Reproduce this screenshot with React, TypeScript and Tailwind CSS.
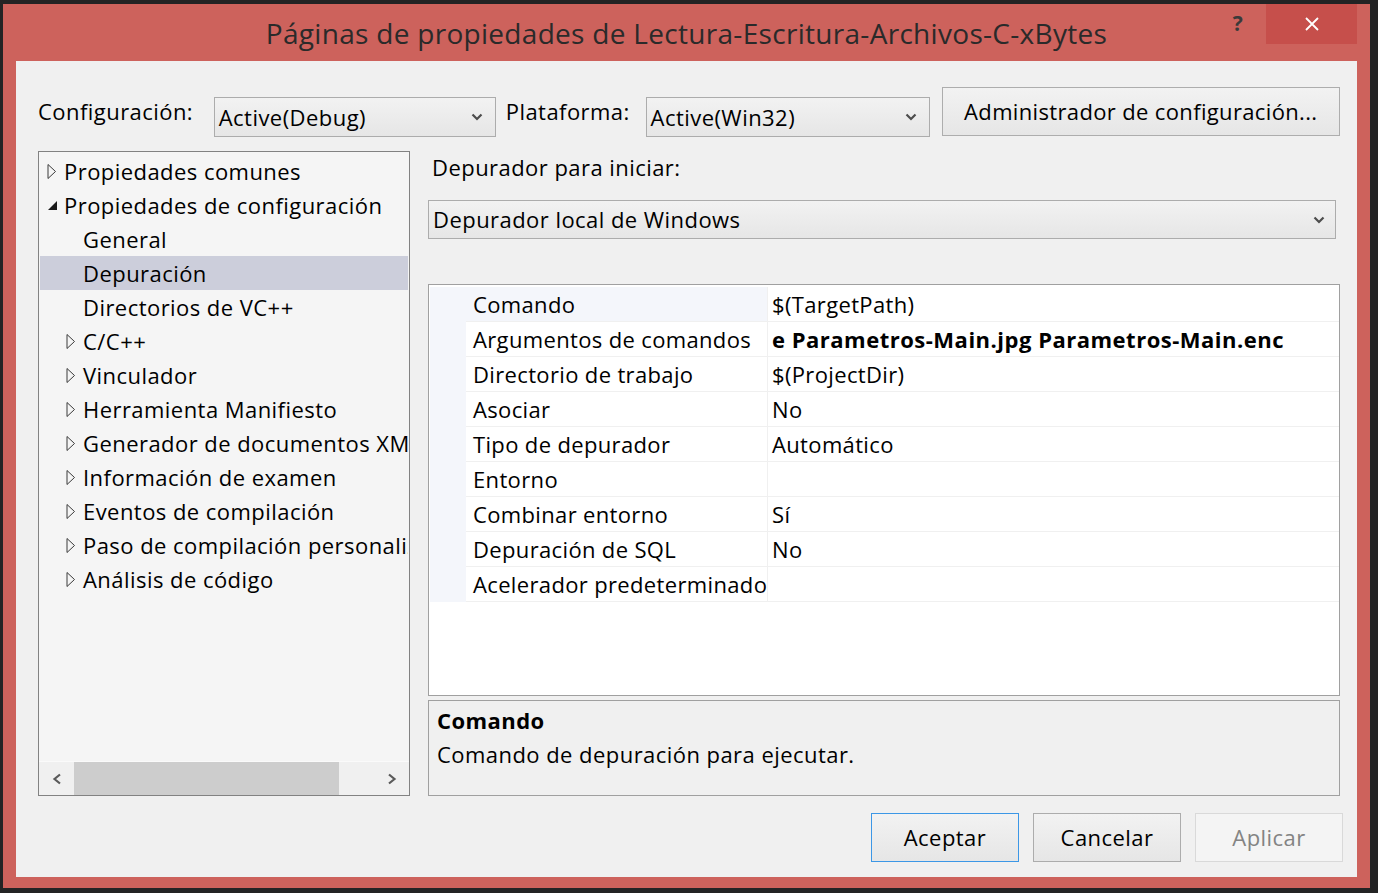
import React from 'react';

const font = { fontFamily: '"Open Sans", "Noto Sans", sans-serif' };

type TreeItem = { label: string; level: 0 | 1; tri: 'closed' | 'open' | 'none'; selected?: boolean };

const treeItems: TreeItem[] = [
  { label: 'Propiedades comunes', level: 0, tri: 'closed' },
  { label: 'Propiedades de configuración', level: 0, tri: 'open' },
  { label: 'General', level: 1, tri: 'none' },
  { label: 'Depuración', level: 1, tri: 'none', selected: true },
  { label: 'Directorios de VC++', level: 1, tri: 'none' },
  { label: 'C/C++', level: 1, tri: 'closed' },
  { label: 'Vinculador', level: 1, tri: 'closed' },
  { label: 'Herramienta Manifiesto', level: 1, tri: 'closed' },
  { label: 'Generador de documentos XML', level: 1, tri: 'closed' },
  { label: 'Información de examen', level: 1, tri: 'closed' },
  { label: 'Eventos de compilación', level: 1, tri: 'closed' },
  { label: 'Paso de compilación personalizado', level: 1, tri: 'closed' },
  { label: 'Análisis de código', level: 1, tri: 'closed' },
];

const props: { name: string; value: string; bold?: boolean }[] = [
  { name: 'Comando', value: '$(TargetPath)' },
  { name: 'Argumentos de comandos', value: 'e Parametros-Main.jpg Parametros-Main.enc', bold: true },
  { name: 'Directorio de trabajo', value: '$(ProjectDir)' },
  { name: 'Asociar', value: 'No' },
  { name: 'Tipo de depurador', value: 'Automático' },
  { name: 'Entorno', value: '' },
  { name: 'Combinar entorno', value: 'Sí' },
  { name: 'Depuración de SQL', value: 'No' },
  { name: 'Acelerador predeterminado', value: '' },
];

const Chevron = () => (
  <svg width="12" height="8" viewBox="0 0 12 8" className="shrink-0">
    <polyline points="1.5,1.5 6,6 10.5,1.5" fill="none" stroke="#4d4d4d" strokeWidth="2.2" />
  </svg>
);

const Triangle = ({ kind }: { kind: 'closed' | 'open' }) =>
  kind === 'closed' ? (
    <svg width="10" height="17" viewBox="0 0 10 17" className="shrink-0">
      <polygon points="1,1.5 8.5,8.5 1,15.5" fill="none" stroke="#3a3a3a" strokeWidth="1" />
    </svg>
  ) : (
    <svg width="11" height="11" viewBox="0 0 11 11" className="shrink-0">
      <polygon points="1,10 10,10 10,1" fill="#1a1a1a" />
    </svg>
  );

const Dropdown = ({ text, width }: { text: string; width: string }) => (
  <div
    className={`${width} h-[40px] flex items-center justify-between pl-[4px] pr-[12px] border border-[#acacac] bg-gradient-to-b from-[#f2f2f2] to-[#e6e6e6] text-[22px] text-black`}
  >
    <span className="whitespace-nowrap">{text}</span>
    <Chevron />
  </div>
);

const DialogButton = ({ text, variant }: { text: string; variant: 'default' | 'normal' | 'disabled' }) => {
  const cls =
    variant === 'default'
      ? 'border-[#3c97e6] bg-gradient-to-b from-[#f2f2f2] to-[#e6e6e6] text-black'
      : variant === 'normal'
        ? 'border-[#acacac] bg-gradient-to-b from-[#f2f2f2] to-[#e6e6e6] text-black'
        : 'border-[#d9d9d9] bg-[#f4f4f4] text-[#838383]';
  return (
    <div className={`w-[148px] h-[49px] flex items-center justify-center border text-[22px] ${cls}`}>{text}</div>
  );
};

export default function App() {
  return (
    <div
      className="w-[1378px] h-[893px] bg-[#232324] pt-[4px] pl-[3px] overflow-hidden tracking-[0.45px]"
      style={font}
    >
      <div className="w-[1367px] h-[884px] bg-[#cd625c] flex flex-col">
        {/* Title bar */}
        <div className="h-[57px] flex items-start relative">
          <div className="absolute left-0 right-0 top-[9px] text-center text-[28px] tracking-[0.3px] leading-[40px] text-[#2a2a2a] whitespace-nowrap">
            Páginas de propiedades de Lectura-Escritura-Archivos-C-xBytes
          </div>
          <div className="ml-auto flex items-start relative">
            <div className="w-[56px] h-[40px] flex items-center justify-center text-[21px] font-bold text-[#3a3a3a]">?</div>
            <div className="w-[91px] h-[40px] mr-[13px] bg-[#c64f4b] flex items-center justify-center">
              <svg width="14" height="14" viewBox="0 0 14 14">
                <path d="M1 1 L13 13 M13 1 L1 13" stroke="#ffffff" strokeWidth="1.8" />
              </svg>
            </div>
          </div>
        </div>

        {/* Client area */}
        <div className="mx-[13px] h-[816px] bg-[#f0f0f0] flex flex-col pl-[22px] pr-[17px] pt-[26px] text-black">
          {/* Configuration row */}
          <div className="flex items-start h-[50px]">
            <div className="h-[40px] mt-[4px] flex items-center text-[22px] w-[176px]">Configuración:</div>
            <div className="mt-[10px]">
              <Dropdown text="Active(Debug)" width="w-[282px]" />
            </div>
            <div className="h-[40px] mt-[4px] flex items-center text-[22px] ml-[10px] w-[140px]">Plataforma:</div>
            <div className="mt-[10px]">
              <Dropdown text="Active(Win32)" width="w-[284px]" />
            </div>
            <div className="ml-[12px] w-[399px] h-[49px] flex items-center justify-center border border-[#adadad] bg-gradient-to-b from-[#f2f2f2] to-[#e6e6e6] text-[22px] tracking-[0.35px]">
              Administrador de configuración...
            </div>
          </div>

          {/* Main row */}
          <div className="flex mt-[14px] h-[645px]">
            {/* Tree */}
            <div className="w-[372px] h-[645px] border border-[#828282] bg-[#f5f5f5] flex flex-col">
              <div className="flex-1 pt-[2px] overflow-hidden">
                {treeItems.map((it) => (
                  <div
                    key={it.label}
                    className={`h-[34px] mx-[1px] flex items-center text-[22px] whitespace-nowrap overflow-hidden ${
                      it.selected ? 'bg-[#cccedb]' : ''
                    }`}
                  >
                    <div className={`${it.level === 0 ? 'w-[24px] pl-[7px]' : 'w-[43px] pl-[26px]'} shrink-0 flex items-center`}>
                      {it.tri !== 'none' && <Triangle kind={it.tri} />}
                    </div>
                    <span>{it.label}</span>
                  </div>
                ))}
              </div>
              <div className="h-[34px] bg-[#f0f0f0] border-t border-[#fafafa] flex items-stretch">
                <div className="w-[35px] flex items-center justify-center">
                  <svg width="10" height="12" viewBox="0 0 10 12">
                    <polyline points="8,1.5 2.5,6 8,10.5" fill="none" stroke="#5a5a5a" strokeWidth="2.2" />
                  </svg>
                </div>
                <div className="w-[265px] bg-[#cdcdcd]" />
                <div className="flex-1" />
                <div className="w-[35px] flex items-center justify-center">
                  <svg width="10" height="12" viewBox="0 0 10 12">
                    <polyline points="2,1.5 7.5,6 2,10.5" fill="none" stroke="#5a5a5a" strokeWidth="2.2" />
                  </svg>
                </div>
              </div>
            </div>

            {/* Right column */}
            <div className="ml-[18px] flex-1 flex flex-col">
              <div className="h-[32px] flex items-center pl-[4px] text-[22px]">Depurador para iniciar:</div>
              <div className="mt-[17px] w-[908px] h-[39px] flex items-center justify-between pl-[4px] pr-[10px] border border-[#acacac] bg-gradient-to-b from-[#f2f2f2] to-[#e6e6e6] text-[22px]">
                <span>Depurador local de Windows</span>
                <Chevron />
              </div>

              {/* Property grid */}
              <div className="mt-[45px] h-[412px] border border-[#a0a0a0] bg-white flex flex-col pt-[2px] pl-[1px] tracking-[0.35px]">
                {props.map((p, i) => (
                  <div key={p.name} className="h-[35px] flex text-[22px] whitespace-nowrap">
                    <div className="w-[36px] shrink-0 bg-[#f4f6fb]" />
                    <div
                      className={`w-[302px] shrink-0 flex items-center pl-[7px] border-b border-r border-[#f0f0f0] ${
                        i === 0 ? 'bg-[#f4f6fb]' : ''
                      }`}
                    >
                      {p.name}
                    </div>
                    <div
                      className={`flex-1 flex items-center pl-[4px] border-b border-[#f0f0f0] overflow-hidden ${
                        p.bold ? 'font-bold tracking-[0.5px]' : ''
                      }`}
                    >
                      {p.value}
                    </div>
                  </div>
                ))}
              </div>

              {/* Description */}
              <div className="mt-[4px] h-[96px] border border-[#a0a0a0] bg-[#f0f0f0] px-[8px] pt-[2px] text-[22px]">
                <div className="font-bold leading-[34px]">Comando</div>
                <div className="leading-[34px]">Comando de depuración para ejecutar.</div>
              </div>
            </div>
          </div>

          {/* Buttons */}
          <div className="mt-[17px] flex justify-end gap-[14px] mr-[-3px]">
            <DialogButton text="Aceptar" variant="default" />
            <DialogButton text="Cancelar" variant="normal" />
            <DialogButton text="Aplicar" variant="disabled" />
          </div>
        </div>
      </div>
    </div>
  );
}
